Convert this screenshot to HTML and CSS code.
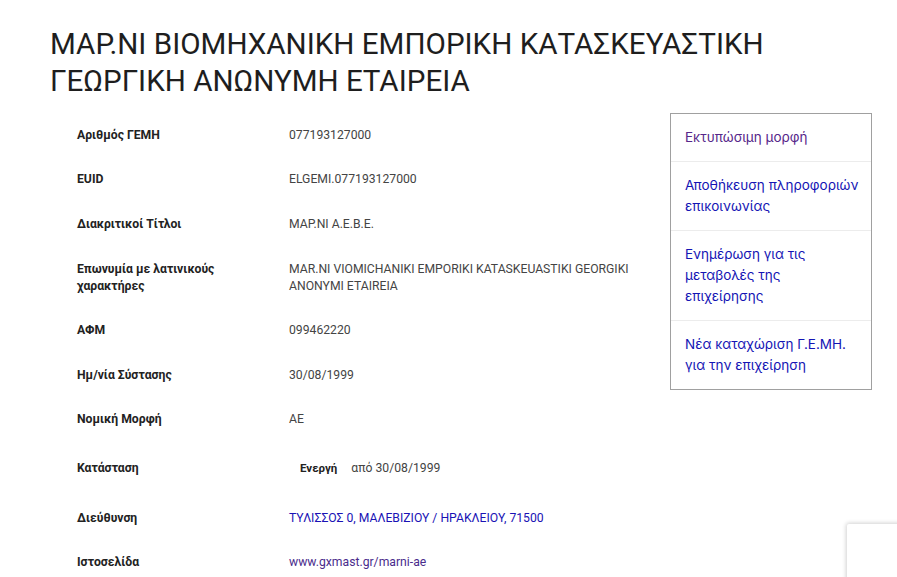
FILE: index.html
```html
<!DOCTYPE html>
<html lang="el">
<head>
<meta charset="utf-8">
<title>ΜΑΡ.ΝΙ</title>
<link rel="stylesheet" href="styles.css">
</head>
<body>
<div class="page">
  <h1 class="title">ΜΑΡ.ΝΙ ΒΙΟΜΗΧΑΝΙΚΗ ΕΜΠΟΡΙΚΗ ΚΑΤΑΣΚΕΥΑΣΤΙΚΗ ΓΕΩΡΓΙΚΗ ΑΝΩΝΥΜΗ ΕΤΑΙΡΕΙΑ</h1>
  <div class="layout">
    <div class="details">
      <div class="row"><div class="label">Αριθμός ΓΕΜΗ</div><div class="value">077193127000</div></div>
      <div class="row"><div class="label">EUID</div><div class="value">ELGEMI.077193127000</div></div>
      <div class="row"><div class="label">Διακριτικοί Τίτλοι</div><div class="value">ΜΑΡ.ΝΙ Α.Ε.Β.Ε.</div></div>
      <div class="row"><div class="label">Επωνυμία με λατινικούς χαρακτήρες</div><div class="value">MAR.NI VIOMICHANIKI EMPORIKI KATASKEUASTIKI GEORGIKI ANONYMI ETAIREIA</div></div>
      <div class="row"><div class="label">ΑΦΜ</div><div class="value">099462220</div></div>
      <div class="row"><div class="label">Ημ/νία Σύστασης</div><div class="value">30/08/1999</div></div>
      <div class="row"><div class="label">Νομική Μορφή</div><div class="value">ΑΕ</div></div>
      <div class="row"><div class="label">Κατάσταση</div><div class="value"><span class="badge">Ενεργή</span> από 30/08/1999</div></div>
      <div class="row"><div class="label">Διεύθυνση</div><div class="value"><a class="link" href="#">ΤΥΛΙΣΣΟΣ 0, ΜΑΛΕΒΙΖΙΟΥ / ΗΡΑΚΛΕΙΟΥ, 71500</a></div></div>
      <div class="row"><div class="label">Ιστοσελίδα</div><div class="value"><a class="link visited" href="#">www.gxmast.gr/marni-ae</a></div></div>
    </div>
    <aside class="side">
      <a class="side-item visited" href="#">Εκτυπώσιμη μορφή</a>
      <a class="side-item" href="#">Αποθήκευση πληροφοριών επικοινωνίας</a>
      <a class="side-item" href="#">Ενημέρωση για τις μεταβολές της επιχείρησης</a>
      <a class="side-item" href="#">Νέα καταχώριση Γ.Ε.ΜΗ. για την επιχείρηση</a>
    </aside>
  </div>
</div>
<div class="captcha"></div>
</body>
</html>
```
FILE: styles.css
```css
html, body {
  margin: 0;
  padding: 0;
  background: #fff;
}
body {
  font-family: Roboto, "Liberation Sans", sans-serif;
  color: #222;
  overflow: hidden;
}
.page {
  padding: 26px 25px 0 50px;
}
.title {
  margin: 0;
  font-weight: 400;
  font-size: 29.6px;
  line-height: 37px;
  color: #1e1e1e;
  width: 822px;
}
.layout {
  display: flex;
  margin-top: 13px;
  width: 822px;
}
.details {
  flex: 1;
  padding-left: 27px;
}
.row {
  display: grid;
  grid-template-columns: 212px 361px;
  align-items: center;
  padding: 13.8px 0;
  font-size: 12.2px;
  line-height: 17px;
}
.label {
  font-weight: 700;
  color: #222;
  padding-right: 30px;
}
.value {
  color: #444;
}
.badge {
  display: inline-block;
  padding: 4px 11px 5px;
  font-size: 11.5px;
  font-weight: 700;
  color: #222;
}
.link {
  color: #1a12b5;
  text-decoration: none;
}
.link.visited {
  color: #4a2c8c;
}
.side {
  width: 200px;
  border: 1px solid #a0a0a0;
  display: flex;
  flex-direction: column;
  align-self: flex-start;
}
.side-item {
  display: block;
  padding: 13px 11px 13px 14px;
  font-family: Inter, "Noto Sans", sans-serif;
  font-size: 13.5px;
  line-height: 21px;
  color: #1414b4;
  text-decoration: none;
  border-top: 1px solid #ececec;
}
.side-item:first-child {
  border-top: none;
}
.side-item.visited {
  color: #57278a;
}
.captcha {
  position: fixed;
  left: 847px;
  top: 524px;
  width: 256px;
  height: 60px;
  background: #fff;
  box-shadow: 0 0 4px 1px rgba(0, 0, 0, 0.18);
  border-radius: 2px;
}
```
